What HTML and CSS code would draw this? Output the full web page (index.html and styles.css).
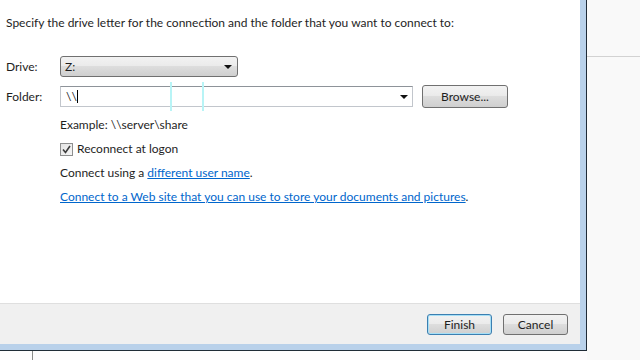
FILE: index.html
```html
<!DOCTYPE html>
<html lang="en">
<head>
    <meta charset="UTF-8">
    <title>Map Network Drive</title>
    <link rel="stylesheet" href="styles.css">
</head>
<body>
    <div class="screen">
        <div class="window">
            <div class="dialog">
                <div class="content">
                    <p class="intro">Specify the drive letter for the connection and the folder that you want to connect to:</p>

                    <div class="form">
                        <label class="label">Drive:</label>
                        <div class="combo">
                            <span>Z:</span>
                            <span class="arrow"></span>
                        </div>
                        <div></div>

                        <label class="label">Folder:</label>
                        <div class="input">
                            <span class="value">\\<span class="caret"></span></span>
                            <span class="arrow"></span>
                        </div>
                        <button class="button browse">Browse...</button>
                    </div>

                    <div class="options">
                        <p class="hint">Example: \\server\share</p>
                        <div class="check-row">
                            <span class="checkbox">
                                <svg width="9" height="9" viewBox="0 0 9 9"><path d="M1 4.5 L3.5 7.5 L8 1" fill="none" stroke="#3c3c3c" stroke-width="1.6"/></svg>
                            </span>
                            <span>Reconnect at logon</span>
                        </div>
                        <p>Connect using a <a href="#">different user name</a>.</p>
                        <p><a href="#">Connect to a Web site that you can use to store your documents and pictures</a>.</p>
                    </div>

                    <span class="glitch glitch-a"></span>
                    <span class="glitch glitch-b"></span>
                </div>
                <div class="footer">
                    <button class="button default">Finish</button>
                    <button class="button">Cancel</button>
                </div>
            </div>
        </div>
        <div class="side">
            <div class="side-rule"></div>
        </div>
        <div class="taskbar">
            <span class="tick"></span>
        </div>
    </div>
</body>
</html>
```

FILE: styles.css
```css
body {
    margin: 0;
    font-family: 'Lato', 'Open Sans', sans-serif;
    font-size: 12px;
    color: #1e1e1e;
    overflow: hidden;
}

p {
    margin: 0;
}

.screen {
    width: 640px;
    height: 360px;
    display: grid;
    grid-template-columns: 587px 1fr;
    grid-template-rows: 351px 9px;
    background: #f9f9f9;
}

.window {
    background: #b9d1ea;
    border-right: 1px solid #1f2a36;
    border-bottom: 1px solid #1f2a36;
    padding: 0 6px 6px 0;
}

.dialog {
    height: 100%;
    display: flex;
    flex-direction: column;
}

.content {
    flex: 1;
    background: #fff;
    position: relative;
}

.intro {
    padding: 15px 0 0 6px;
    line-height: 16px;
}

.form {
    display: grid;
    grid-template-columns: 45px 353px auto;
    column-gap: 9px;
    row-gap: 8px;
    align-items: center;
    padding: 25px 0 0 6px;
}

.combo {
    width: 178px;
    height: 21px;
    border: 1px solid #707070;
    border-radius: 3px;
    background: linear-gradient(#f2f2f2 0%, #ebebeb 45%, #dddddd 50%, #cfcfcf 100%);
    display: flex;
    align-items: center;
    justify-content: space-between;
    padding: 0 5px 0 4px;
    box-sizing: border-box;
}

.arrow {
    width: 0;
    height: 0;
    border-left: 4px solid transparent;
    border-right: 4px solid transparent;
    border-top: 4px solid #111;
}

.input {
    height: 21px;
    box-sizing: border-box;
    border: 1px solid #c2c6cc;
    border-top-color: #8e9399;
    display: flex;
    align-items: center;
    justify-content: space-between;
    padding: 0 4px 0 5px;
}

.caret {
    display: inline-block;
    width: 1px;
    height: 13px;
    background: #000;
    vertical-align: -2px;
}

.button {
    font: inherit;
    color: #1e1e1e;
    height: 23px;
    border: 1px solid #707070;
    border-radius: 3px;
    background: linear-gradient(#f2f2f2 0%, #ebebeb 45%, #dddddd 50%, #cfcfcf 100%);
    padding: 0;
}

.browse {
    width: 86px;
}

.options {
    padding: 9px 0 0 60px;
    display: flex;
    flex-direction: column;
    gap: 8px;
    line-height: 16px;
}

.check-row {
    display: flex;
    align-items: center;
    gap: 4px;
}

.checkbox {
    width: 11px;
    height: 11px;
    border: 1px solid #8e8f8f;
    background: linear-gradient(135deg, #e4e4e4, #f6f6f6);
    display: flex;
    align-items: center;
    justify-content: center;
}

a {
    color: #0066cc;
}

.glitch {
    position: absolute;
    top: 82px;
    width: 2px;
    height: 29px;
    background: #b8f4f6;
}

.glitch-a {
    left: 170px;
}

.glitch-b {
    left: 202px;
}

.footer {
    height: 40px;
    background: #f0f0f0;
    border-top: 1px solid #dfdfdf;
    display: flex;
    justify-content: flex-end;
    align-items: center;
    gap: 11px;
    padding-right: 12px;
}

.footer .button {
    width: 65px;
    height: 21px;
}

.footer .default {
    border-color: #3c7fb1;
    box-shadow: inset 0 0 0 1px #a6dff6;
}

.side {
    grid-row: 1 / 3;
    grid-column: 2;
}

.side-rule {
    margin-top: 56px;
    height: 1px;
    background: #d2d2d2;
}

.taskbar {
    background: #fdfbfd;
    position: relative;
}

.tick {
    position: absolute;
    left: 32px;
    top: 0;
    width: 1px;
    height: 9px;
    background: #8a8a8a;
}
```
